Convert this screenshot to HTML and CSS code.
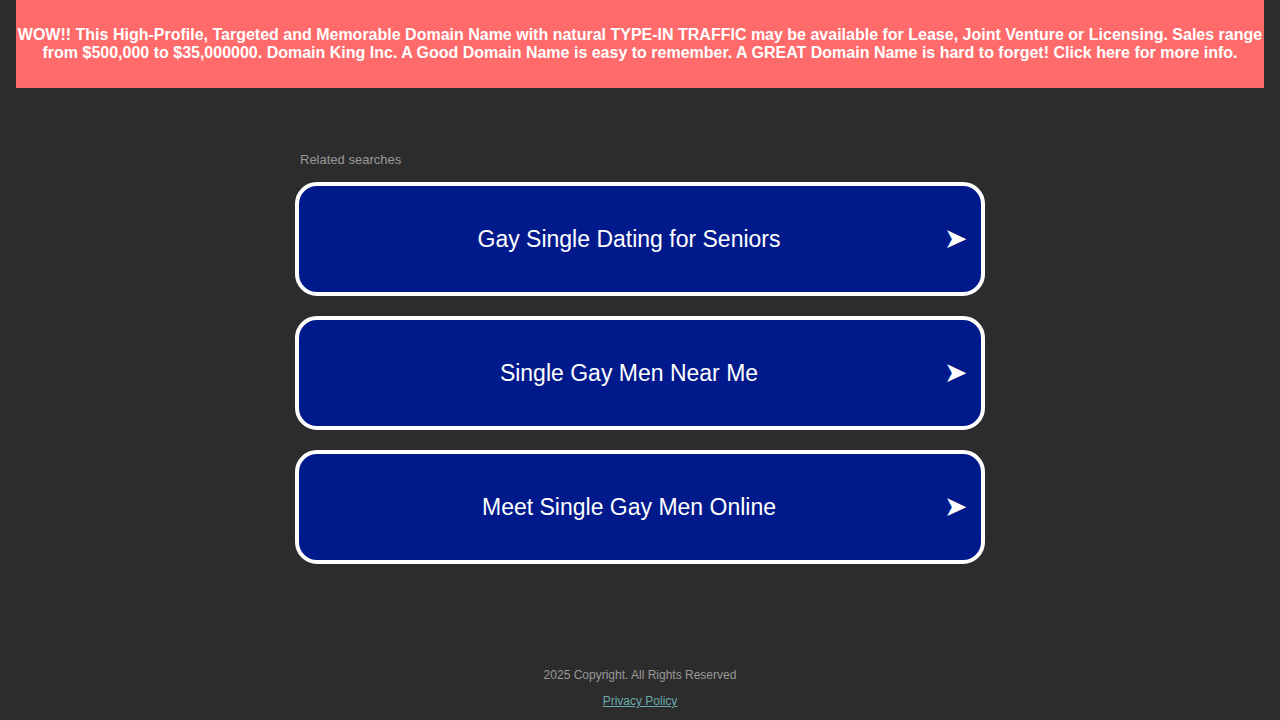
FILE: index.html
```html
<!DOCTYPE html>
<html>
<head>
<meta charset="utf-8">
<link rel="stylesheet" href="styles.css">
</head>
<body>
<div class="banner"><a href="#">WOW!! This High-Profile, Targeted and Memorable Domain Name with natural TYPE-IN TRAFFIC may be available for Lease, Joint Venture or Licensing. Sales range from $500,000 to $35,000000. Domain King Inc. A Good Domain Name is easy to remember. A GREAT Domain Name is hard to forget! Click here for more info.</a></div>
<main class="main">
  <div class="label">Related searches</div>
  <a class="btn" href="#"><span class="btn-text">Gay Single Dating for Seniors</span><span class="arrow">➤</span></a>
  <a class="btn" href="#"><span class="btn-text">Single Gay Men Near Me</span><span class="arrow">➤</span></a>
  <a class="btn" href="#"><span class="btn-text">Meet Single Gay Men Online</span><span class="arrow">➤</span></a>
</main>
<footer class="footer">
  <div class="copy">2025 Copyright. All Rights Reserved</div>
  <a class="privacy" href="#">Privacy Policy</a>
</footer>
</body>
</html>
```
FILE: styles.css
```css
html, body { margin: 0; padding: 0; }
body {
  background: #2c2c2c;
  font-family: "Liberation Sans", Arial, sans-serif;
  width: 1280px;
  height: 720px;
  overflow: hidden;
}
.banner {
  margin: 0 16px;
  background: #ff6b6b;
  height: 88px;
  box-sizing: border-box;
  padding: 26px 0 0;
  text-align: center;
}
.banner a {
  color: #fff;
  font-weight: bold;
  font-size: 16px;
  line-height: 18px;
  text-decoration: none;
}
.main {
  width: 690px;
  margin: 0 auto;
  padding-top: 64px;
  display: flex;
  flex-direction: column;
  gap: 20px;
}
.label {
  color: #999;
  font-size: 13px;
  line-height: 15px;
  padding-left: 5px;
  margin-bottom: -5px;
}
.btn {
  display: flex;
  align-items: center;
  height: 114px;
  box-sizing: border-box;
  border: 4px solid #fff;
  border-radius: 22px;
  background: #011a8b;
  color: #fff;
  text-decoration: none;
  padding-left: 15px;
}
.btn-text {
  flex: 1;
  text-align: center;
  font-size: 23px;
}
.arrow {
  width: 21px;
  margin-right: 16px;
  font-size: 28px;
  line-height: 28px;
  font-family: "DejaVu Sans", sans-serif;
}
.footer {
  margin-top: 104px;
  text-align: center;
  font-size: 12px;
}
.copy { color: #999; line-height: 14px; }
.privacy {
  display: inline-block;
  margin-top: 12px;
  color: #69a9a9;
  line-height: 14px;
}
```
